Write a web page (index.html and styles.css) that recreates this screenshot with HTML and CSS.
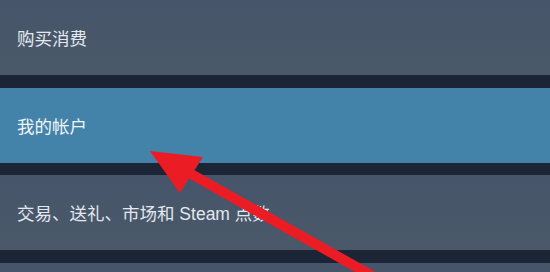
FILE: index.html
```html
<!DOCTYPE html>
<html lang="zh-CN">
<head>
<meta charset="utf-8">
<title>Steam 帐户</title>
<link rel="stylesheet" href="styles.css">
</head>
<body>
<div class="page">
  <nav class="menu">
    <div class="item">购买消费</div>
    <div class="item active">我的帐户</div>
    <div class="item">交易、送礼、市场和 Steam 点数</div>
    <div class="item"></div>
  </nav>
  <svg class="arrow" width="550" height="272" viewBox="0 0 550 272" aria-hidden="true">
    <line x1="186" y1="171" x2="385" y2="283" stroke="#ec1c24" stroke-width="10"/>
    <polygon points="150,151 203,157 180,193" fill="#ec1c24"/>
  </svg>
</div>
</body>
</html>
```
FILE: styles.css
```css
html, body {
  margin: 0;
  padding: 0;
  width: 550px;
  height: 272px;
  overflow: hidden;
  background: #1b2536;
}
.page {
  position: relative;
  width: 550px;
  height: 272px;
  overflow: hidden;
}
.menu {
  display: flex;
  flex-direction: column;
  gap: 12.5px;
  background: #1b2536;
}
.item {
  height: 75px;
  flex: none;
  display: flex;
  align-items: center;
  padding-left: 17px;
  background: linear-gradient(to bottom, #46556a, #4a5869);
  color: #e3e8ee;
  font-family: "Liberation Sans", "Noto Sans CJK SC", sans-serif;
  font-size: 17.5px;
}
.item.active {
  background: #4483a9;
  color: #eef4f8;
}
.arrow {
  position: absolute;
  left: 0;
  top: 0;
}
```
